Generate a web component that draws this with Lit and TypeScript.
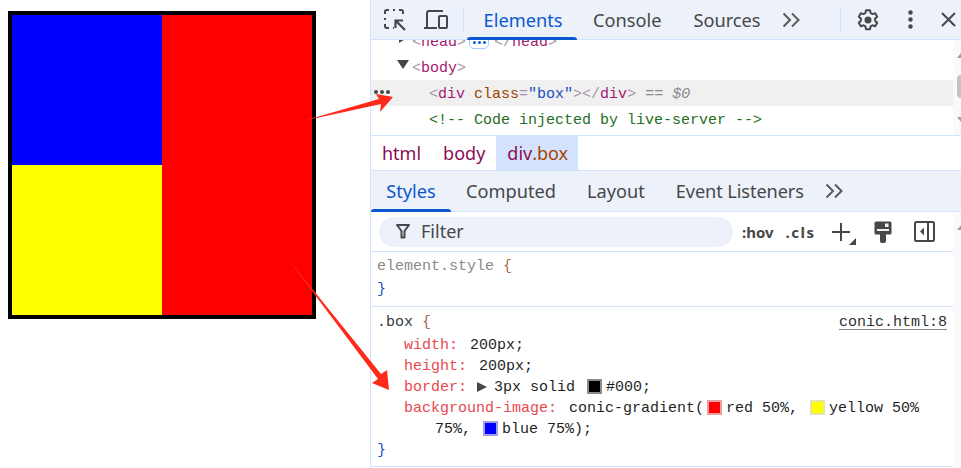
import { LitElement, html, css, svg } from "lit";
import { customElement } from "lit/decorators.js";

const chevrons = html`<svg class="chev" width="18" height="16" viewBox="0 0 18 16"><path d="M1.5 1.5 8 8l-6.500 6.500M10 1.500 16.500 8 10 14.500" fill="none" stroke="#5a5a5a" stroke-width="2"/></svg>`;

@customElement("app-root")
export class AppRoot extends LitElement {
  static styles = css`
    :host { display: flex; width: 961px; height: 468px; overflow: hidden; position: relative; background: #fff; }
    .demo { width: 370px; flex: none; padding: 11px 0 0 8px; box-sizing: border-box; }
    .box { width: 308px; height: 308px; box-sizing: border-box; border: 4px solid #000;
      background-image: conic-gradient(red 50%, yellow 50% 75%, blue 75%); }
    .panel { flex: 1; border-left: 1px solid #d3e3fd; display: flex; flex-direction: column; min-width: 0;
      font-family: "Noto Sans", sans-serif; }
    .bar { display: flex; align-items: center; background: #ecf1fa; border-bottom: 1px solid #d3e3fd; box-sizing: border-box; flex: none; }
    .top { height: 40px; }
    .sub { height: 41px; }
    .tab { height: 100%; display: flex; align-items: center; padding: 0 15px; font-size: 18.2px; color: #474747; position: relative; box-sizing: border-box; }
    .tab.on { color: #0b57d0; }
    .tab.on::after { content: ""; position: absolute; left: 0; right: 0; bottom: -1px; height: 3px; background: #0b57d0; border-radius: 3px 3px 0 0; }
    .top .tab.on { width: 110px; justify-content: center; padding-left: 17px; }
    .sub .tab.on { width: 80px; justify-content: center; }
    .tab.shift2 { margin-left: 2px; }
    .tab.shift1 { margin-left: 1px; }
    .tab.tight { letter-spacing: -0.1px; }
    .sep { width: 1px; height: 24px; background: #d3e3fd; flex: none; }
    .inspect { margin-left: 13px; }
    .device { margin-left: 18px; }
    .top .sep.a { margin-left: 15px; margin-right: 3px; }
    .top .chev { margin-left: 7px; }
    .top .sep.b { margin-left: 40px; }
    .gear { margin-left: 16px; }
    .kebab { margin-left: 29px; }
    .close { margin-left: 28px; }
    .sub .chev { margin-left: 6px; }
    .tree { height: 95px; border-bottom: 1px solid #d3e3fd; overflow: hidden; display: flex; flex: none; }
    .tree-main { flex: 1; margin-top: -12px; min-width: 0; }
    .row { height: 26px; line-height: 30px; white-space: pre; position: relative; }
    .row.sel { background: #f0f0f0; }
    .mono { font-family: "Liberation Mono", monospace; font-size: 15px; }
    .i1 { padding-left: 41px; }
    .i2 { padding-left: 58px; }
    .tw { margin-left: -15px; margin-right: 3px; vertical-align: 2px; }
    .ell-inline { display: inline-flex; width: 20px; height: 14px; border: 1px solid #a8c7fa; border-radius: 5px; align-items: center; justify-content: center; gap: 2px; margin: 0 5px 0 3px; box-sizing: border-box; vertical-align: middle; }
    .ell-inline i { width: 3px; height: 3px; border-radius: 50%; background: #0b57d0; }
    .dots { position: absolute; left: 3px; top: 10px; display: flex; gap: 2px; }
    .dots i { width: 4px; height: 4px; border-radius: 50%; background: #474747; }
    .b { color: #a894a6; }
    .t { color: #a31a6e; }
    .an { color: #994500; }
    .av { color: #1a4fc0; }
    .c { color: #236e25; }
    .eq { color: #8a8a8a; font-style: italic; margin-left: 9px; }
    .sb { width: 8px; background: #fafafa; flex: none; position: relative; overflow: hidden; }
    .sb .up { position: absolute; left: 4px; top: 13px; width: 0; height: 0; border: 4px solid transparent; border-top: 0; border-bottom: 5px solid #a0a0a0; }
    .sb .dn { position: absolute; left: 4px; top: 77px; width: 0; height: 0; border: 4px solid transparent; border-bottom: 0; border-top: 5px solid #a0a0a0; }
    .sb .thumb { position: absolute; left: 4px; top: 35px; width: 10px; height: 23px; border-radius: 4px; background: #c4c4c4; }
    .crumbs { height: 35px; display: flex; align-items: stretch; border-bottom: 1px solid #d3e3fd; box-sizing: border-box; font-size: 18px; flex: none; color: #8a0d52; }
    .crumb { padding: 0 11px; display: flex; align-items: center; }
    .crumb.sel { background: #d3e3fd; padding: 0 10px 0 11px; }
    .crumb .cls { color: #a84300; }
    .lower { flex: 1; display: flex; min-height: 0; }
    .styles { flex: 1; min-width: 0; display: flex; flex-direction: column; }
    .filter { height: 40px; display: flex; align-items: center; border-bottom: 1px solid #d3e3fd; box-sizing: border-box; flex: none; }
    .pill { width: 354px; height: 30px; margin-left: 8px; background: #ecf1fa; border-radius: 15px; display: flex; align-items: center; padding-left: 17px; box-sizing: border-box; font-size: 18px; color: #474747; gap: 11px; }
    .pill span { padding-bottom: 2px; }
    .tool { font-size: 15px; font-weight: 700; color: #474747; font-family: "Noto Sans", sans-serif; }
    .hov { margin-left: 9px; }
    .cl { margin-left: 12px; letter-spacing: 1.5px; }
    .plus { margin-left: 16px; }
    .brush { margin-left: 18px; }
    .side { margin-left: 22px; }
    .rule1 { height: 55px; border-bottom: 1px solid #d3e3fd; box-sizing: border-box; padding: 3px 0 0 6px; flex: none; color: #8a8a8a; }
    .rule1 > div { height: 23px; line-height: 23px; white-space: pre; }
    .rule2 { height: 160px; border-bottom: 1px solid #d3e3fd; box-sizing: border-box; padding: 4px 6px 0 6px; flex: none; color: #1f1f1f; }
    .sel-row { height: 24px; line-height: 23px; display: flex; justify-content: space-between; }
    .sel-name { color: #303942; white-space: pre; }
    .brace { color: #a86a3a; }
    .closer { color: #1a4fc0; }
    .link { text-decoration: underline; text-decoration-color: #888; text-underline-offset: 3px; color: #303030; }
    .decl { height: 21px; line-height: 21px; padding-left: 27px; white-space: pre; }
    .decl.wrap { padding-left: 58px; }
    .close-b { height: 21px; line-height: 21px; color: #1a4fc0; }
    .pn { color: #e8484f; margin-right: 3px; }
    .sw { display: inline-block; vertical-align: -3px; width: 15px; height: 15px; box-sizing: border-box; border: 2px solid; margin: 0 4px 0 3px; }
    .sw.k { background: #000; border-color: #8c8c8c; }
    .sw.r { background: #f00; border-color: #e8a0a0; }
    .sw.y { background: #ff0; border-color: #e4e4a8; }
    .sw.bl { background: #00f; border-color: #a0a0e8; }
    .tri { display: inline-block; vertical-align: -1px; width: 0; height: 0; border-left: 10px solid #474747; border-top: 5.500px solid transparent; border-bottom: 5.500px solid transparent; margin: 0 7px 0 -2px; }
    .sp { margin-left: 12px; }
    .arrows { position: absolute; inset: 0; pointer-events: none; }
  `;

  render() {
    return html`
      <div class="demo"><div class="box"></div></div>
      <div class="panel">
        <div class="bar top">
          <svg class="inspect" width="22" height="22" viewBox="0 0 22 22" fill="none" stroke="#474747" stroke-width="2"><path d="M1 5V3a2 2 0 0 1 2-2h2M9 1h2M15 1h2a2 2 0 0 1 2 2v2M1 9v2M1 15v2a2 2 0 0 0 2 2h2M9 19h1"/><path d="M21 21 12.500 12.500M11.500 19v-7.500H19" stroke-width="2.200"/></svg>
          <svg class="device" width="24" height="19" viewBox="0 0 24 19" fill="none" stroke="#474747" stroke-width="2"><path d="M0 18h13M3 17V3a2 2 0 0 1 2-2h14"/><rect x="15" y="6" width="8" height="12" rx="1"/></svg>
          <div class="sep a"></div>
          <div class="tab on">Elements</div>
          <div class="tab shift1">Console</div>
          <div class="tab shift2">Sources</div>
          ${chevrons}
          <div class="sep b"></div>
          <svg class="gear" width="22" height="22" viewBox="0 0 22 22" fill="none" stroke="#474747" stroke-width="2"><path d="M9 1.200h4l.6 2.800 1.900 1.100 2.700-.9 2 3.500-2.100 1.900v2.200l2.100 1.900-2 3.500-2.700-.9-1.900 1.100-.6 2.800H9l-.6-2.800-1.900-1.100-2.700.9-2-3.500 2.100-1.900V9.600L1.800 7.700l2-3.500 2.700.9L8.400 4z" stroke-linejoin="round"/><circle cx="11" cy="11" r="3.500" fill="#474747" stroke="none"/></svg>
          <svg class="kebab" width="5" height="19" viewBox="0 0 5 19" fill="#474747"><circle cx="2.500" cy="2.500" r="2.200"/><circle cx="2.500" cy="9.500" r="2.200"/><circle cx="2.500" cy="16.500" r="2.200"/></svg>
          <svg class="close" width="15" height="15" viewBox="0 0 15 15" stroke="#474747" stroke-width="2" fill="none"><path d="M1 1l13 13M14 1 1 14"/></svg>
        </div>
        <div class="tree mono">
          <div class="tree-main">
            <div class="row i1"><svg class="tw" width="12" height="12" viewBox="0 0 12 12"><path d="M2 1l8 5-8 5z" fill="#474747"/></svg><span class="b">&lt;</span><span class="t">head</span><span class="b">&gt;</span><span class="ell-inline"><i></i><i></i><i></i></span><span class="b">&lt;/</span><span class="t">head</span><span class="b">&gt;</span></div>
            <div class="row i1"><svg class="tw" width="12" height="12" viewBox="0 0 12 12"><path d="M0 2h12L6 11z" fill="#474747"/></svg><span class="b">&lt;</span><span class="t">body</span><span class="b">&gt;</span></div>
            <div class="row i2 sel"><span class="dots"><i></i><i></i><i></i></span><span class="b">&lt;</span><span class="t">div</span> <span class="an">class</span><span class="b">=</span><span class="av">"box"</span><span class="b">&gt;&lt;/</span><span class="t">div</span><span class="b">&gt;</span><span class="eq">== $0</span></div>
            <div class="row i2"><span class="c">&lt;!-- Code injected by live-server --&gt;</span></div>
          </div>
          <div class="sb"><div class="up"></div><div class="thumb"></div><div class="dn"></div></div>
        </div>
        <div class="crumbs">
          <div class="crumb">html</div>
          <div class="crumb">body</div>
          <div class="crumb sel">div<span class="cls">.box</span></div>
        </div>
        <div class="bar sub">
          <div class="tab on">Styles</div>
          <div class="tab">Computed</div>
          <div class="tab shift1">Layout</div>
          <div class="tab shift1 tight">Event Listeners</div>
          ${chevrons}
        </div>
        <div class="lower">
          <div class="styles">
            <div class="filter">
              <div class="pill">
                <svg width="14" height="15" viewBox="0 0 14 15" fill="none" stroke="#474747" stroke-width="2"><path d="M1 1h12L8.500 7v6.500h-3V7z" stroke-linejoin="round"/></svg>
                <span>Filter</span>
              </div>
              <span class="tool hov">:hov</span>
              <span class="tool cl">.cls</span>
              <svg class="plus" width="24" height="26" viewBox="0 0 24 26"><path d="M9 4v18M0 13h18" stroke="#474747" stroke-width="2"/><path d="M24 19v7h-7z" fill="#474747"/></svg>
              <svg class="brush" width="18" height="22" viewBox="0 0 18 22" fill="none"><path d="M2 .5h14a1.500 1.500 0 0 1 1.500 1.500v10a1.500 1.500 0 0 1-1.500 1.500H2A1.500 1.500 0 0 1 .5 12V2A1.500 1.500 0 0 1 2 .5z" fill="#474747"/><path d="M3 8h12v2H3zM11 2.500h3.500V6H11z" fill="#ecf1fa"/><path d="M6 13h6v7a2 2 0 0 1-2 2H8a2 2 0 0 1-2-2z" fill="#474747"/></svg>
              <svg class="side" width="21" height="21" viewBox="0 0 21 21" fill="none" stroke="#474747" stroke-width="2"><rect x="1" y="1" width="19" height="19" rx="1.500"/><path d="M14 1v19"/><path d="M10 6.500v8l-4-4z" fill="#474747" stroke="none"/></svg>
            </div>
            <div class="rule1 mono">
              <div>element.style <span class="brace">{</span></div>
              <div class="closer">}</div>
            </div>
            <div class="rule2 mono">
              <div class="sel-row"><span class="sel-name">.box <span class="brace">{</span></span><span class="link">conic.html:8</span></div>
              <div class="decl"><span class="pn">width:</span> 200px;</div>
              <div class="decl"><span class="pn">height:</span> 200px;</div>
              <div class="decl"><span class="pn">border:</span> <span class="tri"></span>3px solid <span class="sw k"></span>#000;</div>
              <div class="decl"><span class="pn">background-image:</span> conic-gradient(<span class="sw r"></span>red 50%,<span class="sw y sp"></span>yellow 50%</div>
              <div class="decl wrap">75%,<span class="sw bl sp"></span>blue 75%);</div>
              <div class="close-b">}</div>
            </div>
          </div>
          <div class="sb"><div class="up"></div></div>
        </div>
      </div>
      <svg class="arrows" width="961" height="468" viewBox="0 0 961 468">
        ${svg`<polygon points="303,121 379,99 376,94 393,97 380,112 381,104" fill="#ff2a1a"/>`}
        ${svg`<polygon points="285,255 381,374 387,370 389,390 372,383 378,379" fill="#ff2a1a"/>`}
      </svg>
    `;
  }
}
